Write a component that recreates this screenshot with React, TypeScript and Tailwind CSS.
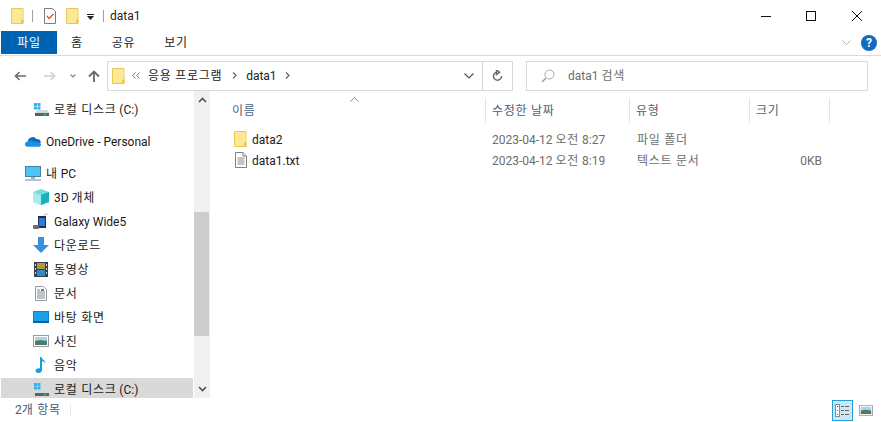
import React from "react";

const Ko = ({ children }: { children: React.ReactNode }) => <span className="tracking-[0.7px]">{children}</span>;

const Folder = ({ className = "" }: { className?: string }) => (
  <svg className={className} width="13" height="16" viewBox="0 0 13 16">
    <path d="M.5.5h11.5v15H.5z" fill="#fce38f" stroke="#eac858" />
    <path d="M1 1h10.500v10H10v4H1z" fill="#fde898" />
    <path d="M10 11.500h2.500v4H10z" fill="#f1c94f" />
  </svg>
);
const Drive = () => (
  <svg width="15" height="13" viewBox="0 0 15 13">
    <rect x="0" y="0" width="3" height="3" fill="#29b6f6" />
    <rect x="3.500" y="0" width="3" height="3" fill="#29b6f6" />
    <rect x="0" y="3.500" width="3" height="3" fill="#29b6f6" />
    <rect x="3.500" y="3.500" width="3" height="3" fill="#29b6f6" />
    <path d="M3 7h10l2 3H1z" fill="#d5d9dc" />
    <rect x="1" y="10" width="14" height="3" fill="#5b6266" />
    <rect x="10" y="11" width="2" height="1" fill="#5be15b" />
  </svg>
);
const Cloud = () => (
  <svg width="17" height="11" viewBox="0 0 17 11">
    <path d="M6 1.500C8 0 11 .5 12 3c2-.5 4.500.7 5 3.500L9 9 3 6c0-2 1-4 3-4.500z" fill="#0f6cbd" />
    <path d="M2.800 11C1 11 0 9.800 0 8.300 0 6.800 1.300 5.400 3.200 5.500 4.800 3.800 7.500 4.300 8.600 6c1.200-.8 3-.6 4 .5 2-.6 4.400.4 4.400 2.500 0 1.200-.9 2-2 2z" fill="#1d8fe0" />
  </svg>
);
const Monitor = () => (
  <svg width="16" height="15" viewBox="0 0 16 15">
    <rect x=".5" y=".5" width="15" height="10" fill="#4dc3f7" stroke="#4b7f9e" />
    <rect x="6" y="11" width="4" height="2" fill="#9fb0bb" />
    <rect x="0" y="13" width="16" height="2" fill="#b8c4cc" />
  </svg>
);
const Cube = () => (
  <svg width="16" height="16" viewBox="0 0 16 16">
    <path d="M8 0l8 3v10l-8 3-8-3V3z" fill="#6fdce2" />
    <path d="M8 6l8-3v10l-8 3z" fill="#1ab0bd" />
    <path d="M0 3l8 3v10l-8-3z" fill="#a5eef0" />
  </svg>
);
const Phone = () => (
  <svg width="16" height="17" viewBox="0 0 16 17">
    <path d="M11 3.500c0-2 2-3 3.500-2.500" fill="none" stroke="#a8a8a8" />
    <rect x="5" y="3" width="8" height="12" fill="#1f2f44" />
    <rect x="6" y="5" width="6" height="8" fill="#2d7fd6" />
    <rect x="0" y="12" width="6" height="4" rx="1" fill="#6d6d6d" />
  </svg>
);
const Down = () => (
  <svg width="16" height="16" viewBox="0 0 16 16">
    <path d="M5 0h6v8h5l-8 8-8-8h5z" fill="#3a8fe0" />
  </svg>
);
const Film = () => (
  <svg width="14" height="15" viewBox="0 0 14 15">
    <rect width="14" height="15" fill="#33404a" />
    <rect x="3" y="1" width="8" height="6" fill="#b7963a" />
    <rect x="3" y="8" width="8" height="6" fill="#2f8ccb" />
    <path d="M1 2h1v2H1zm0 4h1v2H1zm0 4h1v2H1zm11-8h1v2h-1zm0 4h1v2h-1zm0 4h1v2h-1z" fill="#d8d8d8" />
  </svg>
);
const Doc = () => (
  <svg width="12" height="15" viewBox="0 0 12 15">
    <path d="M.5.500h8l3 3v11H.500z" fill="#fff" stroke="#9a9a9a" />
    <path d="M2 4h3M2 6h8M2 8h8M2 10h8M2 12h8" stroke="#7a8a96" />
    <rect x="6" y="3" width="3" height="2" fill="#3b8ed0" />
  </svg>
);
const Desktop = () => (
  <svg width="16" height="12" viewBox="0 0 16 12">
    <rect width="16" height="12" fill="#0d7fd0" />
    <rect x="1" y="1" width="14" height="9" fill="#1aa0ea" />
    <rect x="0" y="10" width="16" height="2" fill="#0a5fa5" />
  </svg>
);
const Photo = ({ w = 16, h = 12 }: { w?: number; h?: number }) => (
  <svg width={w} height={h} viewBox="0 0 16 12">
    <rect x=".5" y=".5" width="15" height="11" fill="#fff" stroke="#9b9b9b" />
    <rect x="2" y="2" width="12" height="4" fill="#a9d3ee" />
    <path d="M2 6l5-1 7 1v4H2z" fill="#4e7a66" />
  </svg>
);
const Music = () => (
  <svg width="12" height="16" viewBox="0 0 12 16">
    <path d="M5 0h1.500c.3 2.500 3.500 3 4 6.500-1-1.500-2.500-2-3.500-2.200V13c0 1.800-1.800 3-3.800 3C1.500 16 .5 15 .5 13.800.5 12 2.500 11 5 11.500z" fill="#1a9be8" />
  </svg>
);
const TextFile = () => (
  <svg width="12" height="16" viewBox="0 0 12 16">
    <path d="M.5.500h7.500l3.500 3.500v11.500H.500z" fill="#fff" stroke="#808080" />
    <path d="M8 .5V4h3.500" fill="#eee" stroke="#808080" />
    <path d="M2.500 6h7M2.500 8h7M2.500 10h7M2.500 12h7" stroke="#8a8a8a" />
  </svg>
);
const QuickCheck = () => (
  <svg width="12" height="16" viewBox="0 0 12 16">
    <path d="M.5.500h8l3 3v12H.500z" fill="#fdfdfd" stroke="#7d7d7d" />
    <path d="M3 8l2 2.500L9.500 6" fill="none" stroke="#e2562d" strokeWidth="1.300" />
  </svg>
);

type Row = { label: React.ReactNode; id: string; icon: React.ReactNode; indent?: boolean; sel?: boolean };
const pcRows: Row[] = [
  { id: "3d", label: <>3D <Ko>개체</Ko></>, icon: <Cube />, indent: true },
  { id: "g", label: "Galaxy Wide5", icon: <Phone />, indent: true },
  { id: "d", label: <Ko>다운로드</Ko>, icon: <Down />, indent: true },
  { id: "v", label: <Ko>동영상</Ko>, icon: <Film />, indent: true },
  { id: "m", label: <Ko>문서</Ko>, icon: <Doc />, indent: true },
  { id: "b", label: <Ko>바탕 화면</Ko>, icon: <Desktop />, indent: true },
  { id: "p", label: <Ko>사진</Ko>, icon: <Photo />, indent: true },
  { id: "a", label: <Ko>음악</Ko>, icon: <Music />, indent: true },
  { id: "c", label: <><Ko>로컬 디스크</Ko> (C:)</>, icon: <Drive />, indent: true, sel: true },
];

const NavRow = ({ label, icon, indent, sel }: Row) => (
  <div className={`flex h-[20px] shrink-0 items-center ${sel ? "bg-[#d9d9d9]" : ""} ${indent ? "pl-[32px]" : "pl-[24px]"}`}>
    <span className="flex w-[16px] shrink-0 items-center justify-center pt-[2px]">{icon}</span>
    <span className="ml-[5px] whitespace-nowrap pt-[4px] text-[#1a1a1a]">{label}</span>
  </div>
);

const Chevron = ({ up }: { up?: boolean }) => (
  <svg width="9" height="6" viewBox="0 0 9 6">
    <path d={up ? "M1 5l3.500-3.500L8 5" : "M1 1l3.500 3.500L8 1"} fill="none" stroke="#505050" strokeWidth="1.600" />
  </svg>
);

const Head = ({ w, label }: { w: string; label: React.ReactNode }) => (
  <div className={`flex h-[25px] items-center border-r border-[#e5e5e5] pl-[6px] text-[#4c607a] ${w}`}>{label}</div>
);

const FileRow = ({ icon, name, date, type, size }: { icon: React.ReactNode; name: string; date: React.ReactNode; type: React.ReactNode; size?: string }) => (
  <div className="flex h-[21px] items-center text-[#6d6d6d]">
    <div className="flex w-[273px] items-center pl-[21px]">
      <span className="flex w-[13px] justify-center">{icon}</span>
      <span className="ml-[5px] pt-[2px] text-[#1a1a1a]">{name}</span>
    </div>
    <div className="w-[144px] pl-[6px] pt-[2px]">{date}</div>
    <div className="w-[120px] pl-[7px] pt-[2px]">{type}</div>
    <div className="w-[72px] pt-[2px] text-right">{size}</div>
  </div>
);

export default function App() {
  return (
    <div className="flex h-[422px] w-[881px] flex-col overflow-hidden bg-white text-[12px] leading-none text-[#1a1a1a] [font-family:'Roboto','Noto_Sans_CJK_KR',sans-serif]">
      {/* title bar */}
      <div className="flex h-[31px] shrink-0 items-center pl-[11px]">
        <Folder />
        <span className="ml-[8px] h-[12px] w-px bg-[#a0a0a0]" />
        <span className="ml-[11px] flex"><QuickCheck /></span>
        <span className="ml-[10px] flex"><Folder /></span>
        <svg className="ml-[8px] mt-[3px]" width="7" height="6" viewBox="0 0 7 6">
          <path d="M0 0h7v1H0zM0 2h7L3.500 6z" fill="#222" />
        </svg>
        <span className="ml-[9px] h-[12px] w-px bg-[#a0a0a0]" />
        <span className="ml-[6px] text-[#222]">data1</span>
        <div className="ml-auto flex items-center pr-[19px]">
          <svg width="10" height="10" viewBox="0 0 10 10"><path d="M0 5.500h10" stroke="#111" /></svg>
          <svg className="ml-[35px]" width="10" height="10" viewBox="0 0 10 10"><rect x=".5" y=".5" width="9" height="9" fill="none" stroke="#111" /></svg>
          <svg className="ml-[36px]" width="10" height="10" viewBox="0 0 10 10"><path d="M0 0l10 10M10 0L0 10" stroke="#111" /></svg>
        </div>
      </div>
      {/* tabs */}
      <div className="flex h-[25px] shrink-0 items-start border-b border-[#dadbdc] pl-px">
        <div className="flex h-[23px] w-[56px] items-center justify-center bg-[#0063b1] text-white"><Ko>파일</Ko></div>
        <div className="ml-[14px] flex h-[23px] items-center text-[#222]"><Ko>홈</Ko></div>
        <div className="ml-[29px] flex h-[23px] items-center text-[#222]"><Ko>공유</Ko></div>
        <div className="ml-[29px] flex h-[23px] items-center text-[#222]"><Ko>보기</Ko></div>
        <div className="ml-auto flex h-[23px] items-center pr-[4px]">
          <svg width="9" height="6" viewBox="0 0 9 6"><path d="M.5.500l4 4 4-4" fill="none" stroke="#b5b5b5" /></svg>
          <span className="ml-[10px] flex h-[16px] w-[16px] items-center justify-center rounded-full bg-[#0f6cbd] text-[12px] font-bold text-white">?</span>
        </div>
      </div>
      {/* nav */}
      <div className="flex h-[35px] shrink-0 items-center pl-[14px] pb-[1px] pt-[5px]">
        <svg width="12" height="10" viewBox="0 0 12 10"><path d="M12 5H1.500M5.500 1L1.500 5l4 4" fill="none" stroke="#6a6a6a" strokeWidth="1.600" /></svg>
        <svg className="ml-[18px]" width="12" height="10" viewBox="0 0 12 10"><path d="M0 5h10.500M6.500 1l4 4-4 4" fill="none" stroke="#d0d0d0" strokeWidth="1.600" /></svg>
        <svg className="ml-[14px]" width="6" height="4" viewBox="0 0 6 4"><path d="M.5.500l2.500 2.500L5.500.500" fill="none" stroke="#888" strokeWidth="1.200" /></svg>
        <svg className="ml-[12px]" width="12" height="12" viewBox="0 0 12 12"><path d="M6 12V1.500M1 6.500l5-5 5 5" fill="none" stroke="#6a6a6a" strokeWidth="1.800" /></svg>
        <div className="ml-[7px] flex h-[30px] w-[376px] items-center border border-[#d9d9d9] pl-[4px] text-[#222]">
          <Folder />
          <svg className="ml-[7px]" width="8" height="7" viewBox="0 0 8 7"><path d="M3.500.500L.800 3.500l2.700 3M7.500.500L4.800 3.500l2.700 3" fill="none" stroke="#777" /></svg>
          <span className="ml-[8px]"><Ko>응용 프로그램</Ko></span>
          <svg className="ml-[10px]" width="5" height="7" viewBox="0 0 5 7"><path d="M1 .500l3 3-3 3" fill="none" stroke="#666" strokeWidth="1.200" /></svg>
          <span className="ml-[9px]">data1</span>
          <svg className="ml-[8px]" width="5" height="7" viewBox="0 0 5 7"><path d="M1 .500l3 3-3 3" fill="none" stroke="#666" strokeWidth="1.200" /></svg>
          <svg className="ml-auto mr-[8px]" width="10" height="6" viewBox="0 0 10 6"><path d="M.5.500L5 5 9.500.500" fill="none" stroke="#555" strokeWidth="1.200" /></svg>
        </div>
        <div className="flex h-[30px] w-[30px] items-center justify-center border border-l-0 border-[#d9d9d9]">
          <svg width="11" height="12" viewBox="0 0 11 12"><path d="M5 2.200A4 4 0 1 0 9.500 6M4.500 0v4.500L7.500 2.200z" fill="none" stroke="#6a6a6a" strokeWidth="1.500" /></svg>
        </div>
        <div className="ml-[13px] flex h-[30px] w-[342px] items-center border border-[#d9d9d9] pl-[14px] text-[#6d6d6d]">
          <svg width="14" height="14" viewBox="0 0 14 14"><circle cx="8.500" cy="5.500" r="4.500" fill="none" stroke="#a8a8a8" /><path d="M5 9l-4 4" stroke="#c8866a" strokeWidth="1.200" /></svg>
          <span className="ml-[13px]">data1 <Ko>검색</Ko></span>
        </div>
      </div>
      {/* body */}
      <div className="flex min-h-0 flex-1">
        <div className="flex w-[193px] shrink-0 flex-col overflow-hidden pl-px pt-[7px]">
          <NavRow id="c0" label={<><Ko>로컬 디스크</Ko> (C:)</>} icon={<Drive />} indent />
          <div className="mt-[12px]"><NavRow id="o" label="OneDrive - Personal" icon={<Cloud />} /></div>
          <div className="mt-[12px]"><NavRow id="pc" label={<><Ko>내</Ko> PC</>} icon={<Monitor />} /></div>
          <div className="mt-[4px] flex flex-col gap-[4px]">
            {pcRows.map((r) => <NavRow key={r.id} {...r} />)}
          </div>
        </div>
        <div className="ml-px flex h-full w-[16px] shrink-0 flex-col bg-[#f0f0f0]">
          <div className="flex h-[17px] items-center justify-center"><Chevron up /></div>
          <div className="mt-[104px] h-[124px] w-[15px] bg-[#cdcdcd]" />
          <div className="flex flex-1 items-end justify-center pb-[6px]"><Chevron /></div>
        </div>
        <div className="relative flex-1 pl-[3px] pt-[7px]">
          <svg className="absolute left-[140px] top-[6px]" width="9" height="5" viewBox="0 0 9 5"><path d="M.5 4.500l4-4 4 4" fill="none" stroke="#8a8a8a" /></svg>
          <div className="flex">
            <Head w="w-[273px] pl-[19px]" label={<Ko>이름</Ko>} />
            <Head w="w-[144px]" label={<Ko>수정한 날짜</Ko>} />
            <Head w="w-[120px]" label={<Ko>유형</Ko>} />
            <Head w="w-[80px]" label={<Ko>크기</Ko>} />
          </div>
          <div className="mt-[5px]">
            <FileRow icon={<Folder />} name="data2" date={<>2023-04-12 <Ko>오전</Ko> 8:27</>} type={<Ko>파일 폴더</Ko>} />
            <FileRow icon={<TextFile />} name="data1.txt" date={<>2023-04-12 <Ko>오전</Ko> 8:19</>} type={<Ko>텍스트 문서</Ko>} size="0KB" />
          </div>
        </div>
      </div>
      {/* status */}
      <div className="flex h-[24px] shrink-0 items-center pl-[15px] text-[#3c5a80]">
        <span>2<Ko>개 항목</Ko></span>
        <span className="ml-[9px] h-[12px] w-px bg-[#e8e8e8]" />
        <div className="ml-auto flex items-center pr-[8px]">
          <div className="flex h-[21px] w-[21px] items-center justify-center border border-[#26a0da] bg-[#cbe8f6]">
            <svg width="15" height="13" viewBox="0 0 15 13">
              <rect x=".5" y=".5" width="4" height="12" fill="#fff" stroke="#8a8a8a" />
              <path d="M6 2.500h3M10 2.500h4M6 6.500h3M10 6.500h4M6 10.500h3M10 10.500h4" stroke="#666" />
              <rect x="2" y="2" width="1" height="1" fill="#333" /><rect x="2" y="6" width="1" height="1" fill="#3a7" /><rect x="2" y="10" width="1" height="1" fill="#b33" />
            </svg>
          </div>
          <span className="ml-[6px] flex"><Photo w={14} h={11} /></span>
        </div>
      </div>
    </div>
  );
}
